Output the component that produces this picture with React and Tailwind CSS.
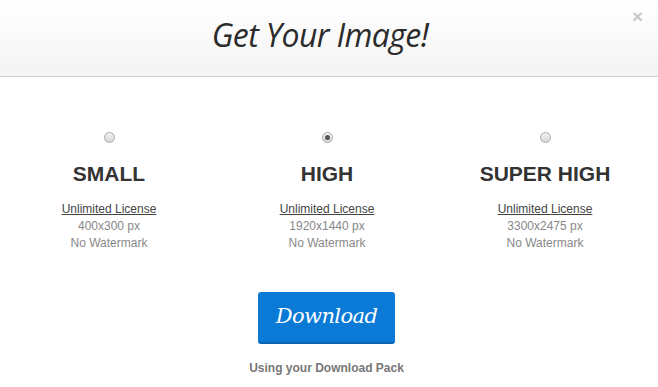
import React from 'react';

const SIZES = [
  { name: 'SMALL', dims: '400x300 px', checked: false },
  { name: 'HIGH', dims: '1920x1440 px', checked: true },
  { name: 'SUPER HIGH', dims: '3300x2475 px', checked: false },
];

function Radio({ checked }) {
  return (
    <span className="w-[11px] h-[11px] rounded-full border border-[#a8a8a8] bg-gradient-to-b from-[#f2f2f2] to-[#d8d8d8] flex items-center justify-center">
      {checked && <span className="w-[5px] h-[5px] rounded-full bg-[#555]" />}
    </span>
  );
}

export default function App() {
  return (
    <div className="w-[658px] h-[387px] bg-white overflow-hidden font-['Liberation_Sans',Arial,sans-serif]">
      {/* Header */}
      <div className="relative h-[77px] bg-gradient-to-b from-white to-[#f4f4f4] border-b border-[#c8d0d8] flex items-center justify-center">
        <h1 className="font-['Open_Sans',sans-serif] italic text-[32px] text-[#2b2b2b] tracking-[-0.6px] -mt-[6px] pr-[18px]">
          Get Your Image!
        </h1>
        <span className="absolute right-[15px] top-[3px] text-[#c8c8c8] text-[19px] font-bold">×</span>
      </div>

      {/* Options */}
      <div className="grid grid-cols-3 w-[654px] pt-[55px]">
        {SIZES.map((s) => (
          <div key={s.name} className="flex flex-col items-center">
            <Radio checked={s.checked} />
            <div className="mt-[19px] text-[21px] font-bold text-[#333] leading-[24px]">{s.name}</div>
            <div className="mt-[15px] text-[12px] leading-[17px] text-center">
              <div className="text-[#444] underline">Unlimited License</div>
              <div className="text-[#888]">{s.dims}</div>
              <div className="text-[#888]">No Watermark</div>
            </div>
          </div>
        ))}
      </div>

      {/* Download */}
      <div className="flex flex-col items-center w-[653px] mt-[40px]">
        <button className="w-[137px] h-[52px] rounded-[3px] bg-[#0a7ad6] border-b-2 border-[#0866b4] text-white font-['DejaVu_Serif',serif] italic text-[21px] tracking-[-0.6px]">
          Download
        </button>
        <div className="mt-[15px] text-[12px] font-bold text-[#777]">Using your Download Pack</div>
      </div>
    </div>
  );
}
